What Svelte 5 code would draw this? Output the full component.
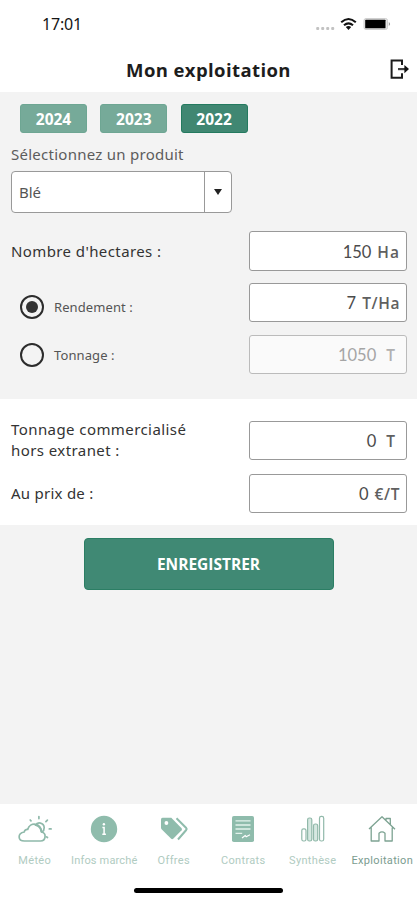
<script>
  let year = $state('2022');
  let mode = $state('rendement');
  const years = ['2024', '2023', '2022'];
</script>

<div class="screen">
  <div class="status">
    <span class="time">17:01</span>
    <svg class="indicators" width="76" height="16" viewBox="0 0 76 16">
      <g fill="#c2c2c2"><rect x="1.2" y="11" width="3" height="3" rx="1"/><rect x="6.2" y="11" width="3" height="3" rx="1"/><rect x="11.2" y="11" width="3" height="3" rx="1"/><rect x="16.2" y="11" width="3" height="3" rx="1"/></g>
      <g fill="none" stroke="#111" stroke-width="2.1"><path d="M26.2 6.2Q33.5-.2 40.8 6.2"/><path d="M29 9.2Q33.5 5.4 38 9.2"/></g>
      <path d="M30.8 11Q33.5 9.1 36.2 11L33.5 13.9z" fill="#111"/>
      <rect x="49" y="2.5" width="23.5" height="11" rx="2" fill="#e6e6e6" stroke="#cfcfcf"/>
      <rect x="50.2" y="3.7" width="20.3" height="8.6" rx=".6" fill="#000"/>
      <path d="M73.8 6Q76.4 8 73.8 10z" fill="#999"/>
    </svg>
  </div>
  <header>
    <h1>Mon exploitation</h1>
    <button class="logout" aria-label="Déconnexion">
      <svg width="20" height="21" viewBox="0 0 20 21"><path d="M12 6V1.5H1.6V18.8H12V14.2" fill="none" stroke="#1c1c1c" stroke-width="2"/><path d="M8 10.1H15" stroke="#444" stroke-width="2.2"/><path d="M14.4 6L19 10.1L14.4 14.2z" fill="#111"/></svg>
    </button>
  </header>

  <section class="culture">
    <div class="years">
      {#each years as y}
        <button class:active={year === y} onclick={() => (year = y)}>{y}</button>
      {/each}
    </div>
    <div class="pick">Sélectionnez un produit</div>
    <div class="select"><span>Blé</span><i><svg width="8" height="6" viewBox="0 0 8 6"><path d="M0 0H8L4 6z" fill="#222"/></svg></i></div>
    <div class="row hectares"><span class="label l1">Nombre d'hectares :</span><div class="field"><span>150</span><b>Ha</b></div></div>
    <div class="row rend">
      <button class="radio" onclick={() => (mode = 'rendement')}><span class="ring" class:on={mode === 'rendement'}></span><span>Rendement :</span></button>
      <div class="field"><span>7</span><b class="tight">T/Ha</b></div>
    </div>
    <div class="row tonnage">
      <button class="radio" onclick={() => (mode = 'tonnage')}><span class="ring" class:on={mode === 'tonnage'}></span><span>Tonnage :</span></button>
      <div class="field disabled t"><span>1050</span><b>T</b></div>
    </div>
  </section>

  <section class="sold">
    <div class="row first"><span class="label l2">Tonnage commercialisé<br /><em>hors extranet :</em></span><div class="field t"><span>0</span><b>T</b></div></div>
    <div class="row second"><span class="label l3">Au prix de :</span><div class="field"><span>0</span><b class="tight">€/T</b></div></div>
  </section>

  <main><button class="save">ENREGISTRER</button></main>

  <nav>
    <div class="tab">
      <svg width="34" height="28" viewBox="0 0 34 28" fill="none" stroke="#8fb9aa" stroke-width="1.7" stroke-linecap="round" stroke-linejoin="round"><path d="M6.5 26H22.5C28 26 28.8 18 23.5 17C23.5 7.8 11.7 6.5 9.7 14.5C8 14.3 6.5 15.2 6.3 17C-.8 18.2-.4 26 6.5 26z"/><path d="M17.5 10.2C19.5 6.5 25.8 7.5 26.2 12.5C26.3 14.5 25.3 16.2 24 17.2M18.5 10.5Q22.5 12 23.3 16.5"/><path d="M20.9 1.6v2M12.2 5l.8.8M29.4 5.2l-1.5 1.5M31.3 13.9h1.8M28.6 21.8l.9.7"/></svg>
      <span>Météo</span>
    </div>
    <div class="tab">
      <svg width="28" height="28" viewBox="0 0 28 28"><circle cx="14" cy="14" r="13.2" fill="#8fbcac"/><circle cx="13.9" cy="9.3" r="1.2" fill="#fff"/><path d="M12.4 12.6H14.1V19.3M12.3 19.3H15.9" fill="none" stroke="#fff" stroke-width="1.5"/></svg>
      <span class="n2">Infos marché</span>
    </div>
    <div class="tab">
      <svg width="28" height="28" viewBox="0 0 28 28"><path d="M1 4.2Q1 2.7 2.5 2.7H11.3L21.6 13.2Q22.4 14.2 21.6 15.2L13.2 23.7Q12.2 24.6 11.2 23.7L1.6 14.2Q1 13.6 1 12.6z" fill="#8fbcac"/><circle cx="6.4" cy="8" r="1.9" fill="#fff"/><path d="M16.5 3.3L26.2 13Q27 14 26.2 15L18 24.5" fill="none" stroke="#8fbcac" stroke-width="2"/></svg>
      <span>Offres</span>
    </div>
    <div class="tab">
      <svg width="28" height="28" viewBox="0 0 28 28"><rect x="3" y="1" width="22" height="26" rx="1.8" fill="#8fbcac"/><path d="M6.5 5.8H21.5M6.5 10H21.5M6.5 14H21.5M6.5 18.3H13.2" stroke="#e4f2ec" stroke-width="1.3"/><path d="M13 23L16.2 20.5L17.2 21.7L21 19.8" fill="none" stroke="#fff" stroke-width="1.2"/></svg>
      <span>Contrats</span>
    </div>
    <div class="tab">
      <svg width="28" height="28" viewBox="0 0 28 28" fill="#d6e8e1" stroke="#91b9aa" stroke-width="1.2"><rect x="2.8" y="13.8" width="4.2" height="12.2" rx="1.8" fill="#fff"/><rect x="8.6" y="3" width="4.2" height="23" rx="1.8"/><rect x="14.5" y="9" width="4.2" height="17" rx="1.8"/><rect x="20.5" y="1.4" width="4.2" height="24.6" rx="1.8" fill="#fff"/></svg>
      <span>Synthèse</span>
    </div>
    <div class="tab current">
      <svg width="28" height="28" viewBox="0 0 28 28" fill="none" stroke="#7da392" stroke-width="1.3" stroke-linejoin="round"><path d="M1 14L14 1.8L27 14.2M3.2 12.5V26H11V18.2Q14 15.7 17 18.2V26H24.2V12.5M18 5.4V3.5H22.3V9.5"/></svg>
      <span>Exploitation</span>
    </div>
    <div class="home"></div>
  </nav>
</div>

<style>
  .screen { width: 417px; height: 900px; box-sizing: border-box; background: #fff; display: flex; flex-direction: column; font-family: "Noto Sans", sans-serif; color: #333; overflow: hidden; }
  button { border: 0; padding: 0; margin: 0; background: none; font-family: inherit; color: inherit; }
  svg { display: block; flex: none; }
  .status { height: 47px; display: flex; justify-content: space-between; padding: 0 26px 0 42px; box-sizing: border-box; }
  .time { font-size: 16px; line-height: 22px; padding-top: 13px; letter-spacing: -.2px; color: #151515; }
  .indicators { margin-top: 16px; }
  header { height: 45px; display: grid; grid-template-columns: 48px 1fr 48px; }
  h1 { grid-column: 2; margin: 0; font: 700 18.5px/45px "Open Sans", sans-serif; letter-spacing: .4px; text-align: center; color: #1d1d1d; white-space: nowrap; }
  .logout { padding: 12px 0 0 21px; align-self: start; }
  .culture { height: 307px; box-sizing: border-box; background: #f3f3f3; padding: 12px 10px 0 11px; }
  .years { display: flex; gap: 13.3px; margin-left: 9px; height: 29px; }
  .years button { width: 67px; height: 29px; border: 1px solid #6ea693; border-radius: 3px; background: #76aa99; color: #fff; font: 700 15.5px/28px "Open Sans", sans-serif; box-sizing: border-box; }
  .years button.active { background: #408772; border-color: #247a5f; }
  .pick { font-size: 15px; line-height: 20px; margin-top: 11px; color: #5c5c5c; letter-spacing: .26px; white-space: nowrap; }
  .select { width: 221px; height: 42px; box-sizing: border-box; margin-top: 7px; background: #fff; border: 1px solid #999; border-radius: 4px; display: flex; justify-content: space-between; font-size: 15px; line-height: 40px; color: #555; }
  .select span { padding-left: 7px; }
  .select i { width: 26px; border-left: 1px solid #999; display: flex; align-items: center; justify-content: center; }
  .row { display: flex; justify-content: space-between; align-items: center; height: 40px; }
  .hectares { margin-top: 18px; }
  .hectares .field { height: 40px; }
  .rend { margin-top: 11px; }
  .tonnage { margin-top: 12px; }
  .label { font-size: 15px; line-height: 21px; color: #333; white-space: nowrap; }
  .l1 { letter-spacing: .4px; }
  .l2 { letter-spacing: .42px; }
  .l3 { letter-spacing: .25px; }
  .label em { font-style: normal; }
  .field { width: 158px; height: 39px; box-sizing: border-box; background: #fff; border: 1px solid #999; border-radius: 3px; display: flex; justify-content: flex-end; align-items: center; gap: 6px; padding: 1px 6px 0 0; font-family: Lato, sans-serif; font-size: 16.5px; color: #4b4b4b; }
  .field b { font-family: "Open Sans", sans-serif; font-size: 15.5px; letter-spacing: 1px; font-weight: 600; color: #606060; }
  .field b.tight { letter-spacing: .6px; }
  .field.t { gap: 10px; padding-right: 10px; }
  .field.disabled { background: #fafafa; border-color: #bbb; color: #a5a5a5; }
  .field.disabled b { color: #b0b0b0; }
  .radio { display: flex; align-items: center; gap: 10px; margin: 9px 0 0 9px; font-size: 13px; line-height: 20px; letter-spacing: .1px; color: #555; height: 24px; }
  .tonnage .radio { margin-top: 2px; }
  .ring { width: 24px; height: 24px; box-sizing: border-box; border: 2px solid #2c2c2c; border-radius: 50%; display: flex; align-items: center; justify-content: center; }
  .ring.on::after { content: ""; width: 12px; height: 12px; border-radius: 50%; background: #333; }
  .sold { height: 126px; box-sizing: border-box; padding: 21px 10px 0 11px; }
  .second { margin-top: 13px; }
  main { height: 279px; background: #f3f3f3; box-sizing: border-box; padding-top: 13px; display: flex; justify-content: center; align-items: flex-start; }
  .save { width: 250px; height: 52px; background: #408974; border: 1px solid #2b7e64; border-radius: 4px; color: #fff; font: 700 15.5px/51px "Open Sans", sans-serif; }
  nav { height: 96px; display: grid; grid-template-columns: repeat(6, 69.5px); grid-template-rows: 84px 4.5px; box-sizing: border-box; }
  .tab { display: flex; flex-direction: column; align-items: center; padding-top: 11px; color: #b0cbc1; font: 11px/16px Roboto, sans-serif; letter-spacing: .33px; white-space: nowrap; min-width: 0; }
  .tab span { margin-top: 10px; }
  .tab .n2 { letter-spacing: .15px; }
  .current { color: #7b9c8f; }
  .home { grid-column: 1 / -1; justify-self: center; width: 149px; height: 4.5px; border-radius: 3px; background: #000; }
</style>
